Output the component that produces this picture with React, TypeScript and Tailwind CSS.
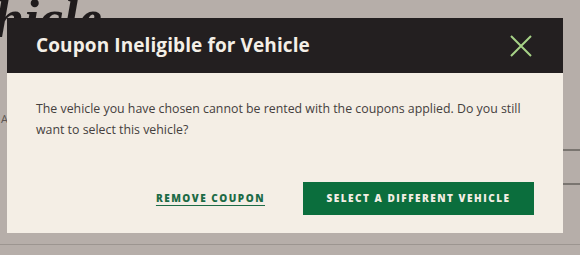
import React from "react"

const sans = { fontFamily: '"Open Sans", "Noto Sans", sans-serif' }

export default function App() {
	return (
		<div className="relative h-[255px] w-[580px] overflow-hidden bg-[#b6aea9]" style={sans}>
			{/* page behind the overlay */}
			<div className="flex h-full flex-col">
				<h1
					className="ml-[-60px] mt-[-8px] text-[54px] font-bold italic leading-none text-[#1f1b1c]"
					style={{ fontFamily: '"Liberation Serif", serif' }}>
					Vehicle
				</h1>
				<div className="mt-[65px] flex items-start justify-between">
					<span className="ml-[1px] text-[11px] text-[#5b5551]">A</span>
					<div className="flex w-[18px] flex-col gap-[32px] pt-[38px]">
						<div className="h-[2px] bg-[#7a7570]" />
						<div className="h-[2px] bg-[#7a7570]" />
					</div>
				</div>
				<div className="mt-auto mb-[10px] h-px bg-[#9c9590]" />
			</div>

			{/* modal */}
			<div className="absolute left-[7px] top-[18px] w-[556px]">
				<div className="flex h-[55px] items-center justify-between bg-[#231f20] pl-[29px] pr-[30px]">
					<h2 className="text-[19px] font-bold tracking-[0.1px] text-[#f4efe7]">
						Coupon Ineligible for Vehicle
					</h2>
					<button className="flex h-[24px] w-[24px] items-center justify-center">
						<svg width="22" height="22" viewBox="0 0 22 22" fill="none">
							<path d="M1 1 L21 21 M21 1 L1 21" stroke="#a7d387" strokeWidth="2" />
						</svg>
					</button>
				</div>
				<div className="bg-[#f4eee5] px-[29px] pb-[18px] pt-[25px]">
					<p className="text-[12.35px] leading-[21px] text-[#45403d]">
						<span className="whitespace-nowrap">
							The vehicle you have chosen cannot be rented with the coupons applied. Do you still
						</span>
						<br />
						want to select this vehicle?
					</p>
					<div className="mt-[42px] flex items-center justify-end gap-[38px]">
						<button className="text-[10px] font-extrabold uppercase tracking-[1.5px] text-[#1c6b46] underline underline-offset-[3px]">
							Remove Coupon
						</button>
						<button className="h-[33px] w-[231px] bg-[#0b6e3d] text-[10px] font-extrabold uppercase tracking-[1.5px] text-[#f4eee5]">
							Select a Different Vehicle
						</button>
					</div>
				</div>
			</div>
		</div>
	)
}
